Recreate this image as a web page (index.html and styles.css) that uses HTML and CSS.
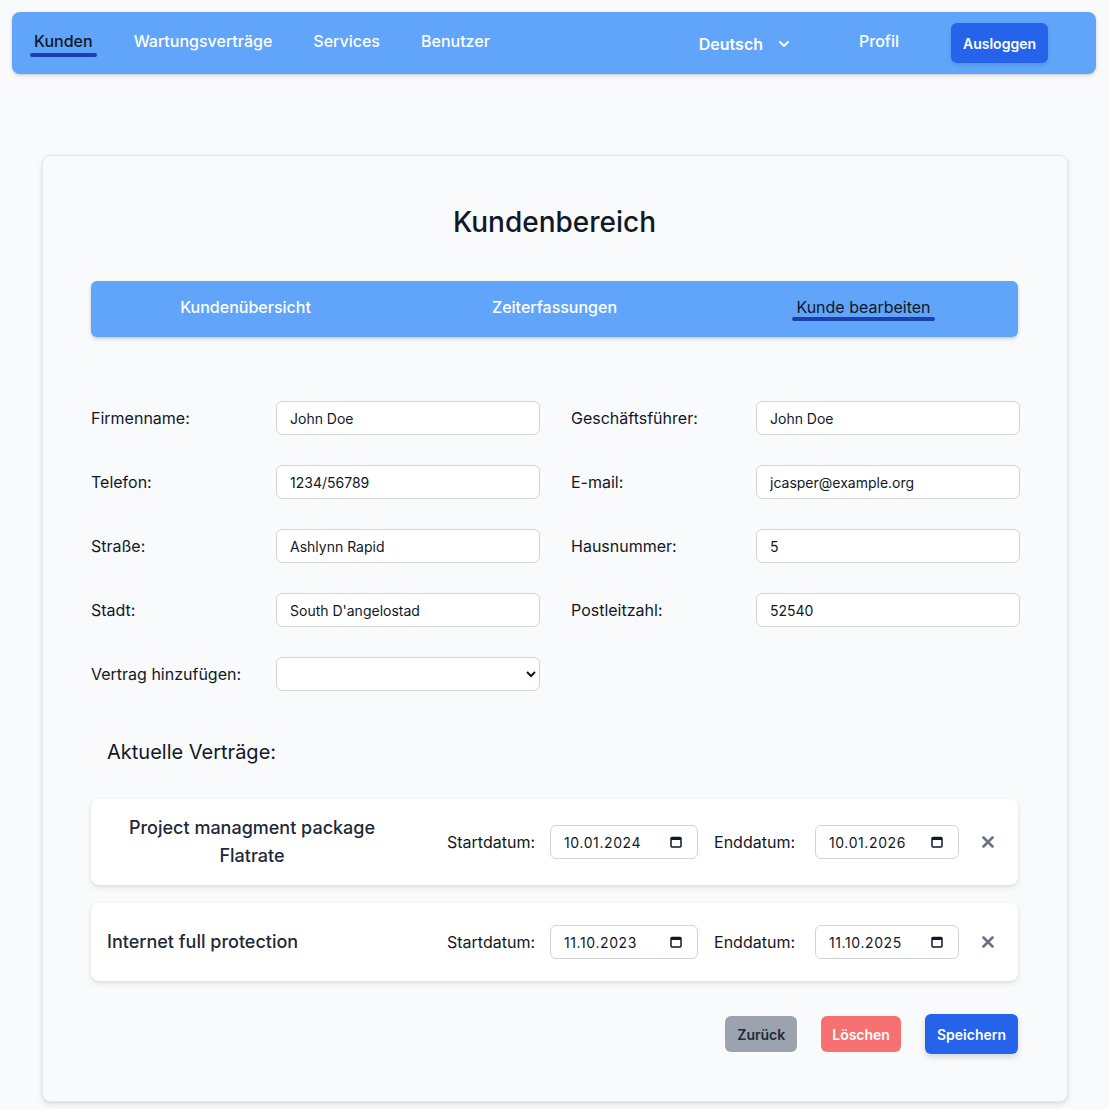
FILE: index.html
```html
<!DOCTYPE html>
<html lang="de">
<head>
<meta charset="utf-8">
<title>Kundenbereich</title>
<link rel="stylesheet" href="styles.css">
</head>
<body>
<nav class="topnav">
  <div class="nav-left">
    <a class="nav-item active">Kunden</a>
    <a class="nav-item">Wartungsverträge</a>
    <a class="nav-item">Services</a>
    <a class="nav-item">Benutzer</a>
  </div>
  <div class="nav-right">
    <div class="lang">
      <span>Deutsch</span>
      <svg class="chev" width="12" height="8" viewBox="0 0 12 8"><path d="M2 2 L6 6 L10 2" fill="none" stroke="#fff" stroke-width="2" stroke-linecap="round" stroke-linejoin="round"/></svg>
    </div>
    <a class="nav-item">Profil</a>
    <button class="btn-logout">Ausloggen</button>
  </div>
</nav>

<main class="card">
  <h1 class="title">Kundenbereich</h1>
  <div class="subnav">
    <div class="sub-cell"><a class="sub-item">Kundenübersicht</a></div>
    <div class="sub-cell"><a class="sub-item">Zeiterfassungen</a></div>
    <div class="sub-cell"><a class="sub-item active">Kunde bearbeiten</a></div>
  </div>

  <form class="form">
    <div class="field"><label>Firmenname:</label><input class="input" value="John Doe"></div>
    <div class="field"><label>Geschäftsführer:</label><input class="input" value="John Doe"></div>
    <div class="field"><label>Telefon:</label><input class="input" value="1234/56789"></div>
    <div class="field"><label>E-mail:</label><input class="input" value="jcasper@example.org"></div>
    <div class="field"><label>Straße:</label><input class="input" value="Ashlynn Rapid"></div>
    <div class="field"><label>Hausnummer:</label><input class="input" value="5"></div>
    <div class="field"><label>Stadt:</label><input class="input" value="South D'angelostad"></div>
    <div class="field"><label>Postleitzahl:</label><input class="input" value="52540"></div>
    <div class="field"><label>Vertrag hinzufügen:</label><select class="input select"><option></option></select></div>
  </form>

  <h2 class="subtitle">Aktuelle Verträge:</h2>

  <div class="contracts">
    <div class="contract">
      <div class="c-name">Project managment package Flatrate</div>
      <div class="c-dates">
        <span class="c-label">Startdatum:</span>
        <div class="date"><span>10.01.2024</span><svg width="12" height="12" viewBox="0 0 12 12"><rect x="1" y="1.5" width="10" height="9.5" rx="1" fill="none" stroke="#111827" stroke-width="1.5"/><rect x="1" y="1.5" width="10" height="2.5" fill="#111827"/></svg></div>
        <span class="c-label end">Enddatum:</span>
        <div class="date"><span>10.01.2026</span><svg width="12" height="12" viewBox="0 0 12 12"><rect x="1" y="1.5" width="10" height="9.5" rx="1" fill="none" stroke="#111827" stroke-width="1.5"/><rect x="1" y="1.5" width="10" height="2.5" fill="#111827"/></svg></div>
        <button class="remove" type="button"><svg width="12" height="12" viewBox="0 0 12 12"><path d="M1.5 1.5 L10.5 10.5 M10.5 1.5 L1.5 10.5" stroke="#6b7280" stroke-width="2.6" stroke-linecap="round"/></svg></button>
      </div>
    </div>
    <div class="contract">
      <div class="c-name">Internet full protection</div>
      <div class="c-dates">
        <span class="c-label">Startdatum:</span>
        <div class="date"><span>11.10.2023</span><svg width="12" height="12" viewBox="0 0 12 12"><rect x="1" y="1.5" width="10" height="9.5" rx="1" fill="none" stroke="#111827" stroke-width="1.5"/><rect x="1" y="1.5" width="10" height="2.5" fill="#111827"/></svg></div>
        <span class="c-label end">Enddatum:</span>
        <div class="date"><span>11.10.2025</span><svg width="12" height="12" viewBox="0 0 12 12"><rect x="1" y="1.5" width="10" height="9.5" rx="1" fill="none" stroke="#111827" stroke-width="1.5"/><rect x="1" y="1.5" width="10" height="2.5" fill="#111827"/></svg></div>
        <button class="remove" type="button"><svg width="12" height="12" viewBox="0 0 12 12"><path d="M1.5 1.5 L10.5 10.5 M10.5 1.5 L1.5 10.5" stroke="#6b7280" stroke-width="2.6" stroke-linecap="round"/></svg></button>
      </div>
    </div>
  </div>

  <div class="actions">
    <button class="btn btn-back" type="button">Zurück</button>
    <button class="btn btn-delete" type="button">Löschen</button>
    <button class="btn btn-save" type="button">Speichern</button>
  </div>
</main>
</body>
</html>
```

FILE: styles.css
```css
* { box-sizing: border-box; }

body {
  margin: 0;
  padding: 12px 13px 7px 12px;
  background: #f9fafb;
  font-family: Inter, "Noto Sans", sans-serif;
  color: #111827;
}

a { cursor: pointer; }

.topnav {
  height: 62px;
  background: #60a5fa;
  border-radius: 8px;
  box-shadow: 0 2px 4px rgba(0,0,0,0.12), 0 1px 2px rgba(0,0,0,0.08);
  display: flex;
  align-items: center;
  justify-content: space-between;
  padding: 0 48px 0 18px;
}

.nav-left, .nav-right {
  display: flex;
  align-items: center;
}

.nav-left { gap: 33px; }

.nav-item {
  font-size: 16px;
  font-weight: 500;
  line-height: 24px;
  color: #fff;
  padding: 0 4px;
  display: flex;
  flex-direction: column;
}

.nav-item::after {
  content: "";
  display: block;
  height: 4px;
  border-radius: 2px;
  margin: 0 -4px;
  background: transparent;
}

.nav-item.active { color: #111827; }
.nav-item.active::after { background: #1e40af; }

.lang {
  display: flex;
  align-items: center;
  color: #fff;
  font-size: 16px;
  font-weight: 600;
  line-height: 24px;
  margin-top: 2px;
  margin-right: 65px;
  padding-left: 1px;
}

.lang .chev { margin-left: 15px; }

.btn-logout {
  margin-left: 48px;
  height: 40px;
  padding: 0 12px;
  border: none;
  border-radius: 6px;
  background: #2563eb;
  color: #fff;
  font-family: inherit;
  font-size: 14px;
  font-weight: 600;
  box-shadow: 0 2px 4px rgba(0,0,0,0.12);
}

.card {
  margin: 81px 0 0 30px;
  width: 1026px;
  background: #f9fafb;
  border: 1px solid #e5e7eb;
  border-radius: 8px;
  box-shadow: 0 3px 6px rgba(0,0,0,0.08), 0 1px 3px rgba(0,0,0,0.06);
  padding: 48px 49px 47px 48px;
}

.title {
  margin: 0;
  text-align: center;
  font-size: 28px;
  line-height: 36px;
  font-weight: 500;
  color: #111827;
}

.subnav {
  margin-top: 41px;
  height: 56px;
  background: #60a5fa;
  border-radius: 6px;
  box-shadow: 0 2px 4px rgba(0,0,0,0.14), 0 1px 2px rgba(0,0,0,0.08);
  display: grid;
  grid-template-columns: 1fr 1fr 1fr;
  align-items: center;
}

.sub-cell { display: flex; justify-content: center; }

.sub-item {
  font-size: 16px;
  font-weight: 500;
  line-height: 20px;
  color: #fff;
  padding: 0 4px;
  display: flex;
  flex-direction: column;
}

.sub-item::after {
  content: "";
  display: block;
  height: 4px;
  border-radius: 2px;
  margin: 0 -4px;
  background: transparent;
}

.sub-item.active { color: #111827; font-weight: 400; }
.sub-item.active::after { background: #1e40af; }

.form {
  margin-top: 64px;
  display: grid;
  grid-template-columns: 449px 449px;
  column-gap: 31px;
  row-gap: 30px;
}

.field {
  display: grid;
  grid-template-columns: 185px 1fr;
  align-items: center;
}

.field label {
  font-size: 16px;
  line-height: 24px;
  color: #111827;
}

.input {
  height: 34px;
  width: 264px;
  border: 1px solid #d1d5db;
  border-radius: 6px;
  background: #fff;
  padding: 0 13px;
  font-family: inherit;
  font-size: 14px;
  color: #111827;
  outline: none;
}

.select { padding: 0 6px 0 10px; }

.subtitle {
  margin: 47px 0 0 16px;
  font-size: 20px;
  line-height: 28px;
  font-weight: 400;
  color: #111827;
}

.contracts {
  margin-top: 33px;
  display: flex;
  flex-direction: column;
  gap: 18px;
}

.contract {
  background: #fff;
  border-radius: 8px;
  box-shadow: 0 3px 6px rgba(0,0,0,0.08), 0 1px 3px rgba(0,0,0,0.06);
  padding: 15px 16px;
  display: flex;
  align-items: center;
  justify-content: space-between;
}

.c-name {
  max-width: 290px;
  text-align: center;
  font-size: 18px;
  line-height: 28px;
  font-weight: 500;
  color: #1f2937;
}

.c-dates {
  display: flex;
  align-items: center;
  height: 48px;
}

.c-label {
  font-size: 16px;
  line-height: 24px;
  color: #111827;
  margin-right: 15px;
}

.c-label.end { margin-left: 16px; margin-right: 20px; }

.date {
  height: 34px;
  width: 148px;
  border: 1px solid #d1d5db;
  border-radius: 6px;
  background: #fff;
  padding: 0 15px 0 13px;
  display: flex;
  align-items: center;
  justify-content: space-between;
  font-size: 14px;
  color: #111827;
  letter-spacing: 0.6px;
}

.date + .c-label + .date { width: 144px; }

.remove {
  margin-left: 15px;
  width: 28px;
  height: 28px;
  padding: 0;
  border: none;
  background: transparent;
  display: flex;
  align-items: center;
  justify-content: center;
}

.actions {
  margin-top: 33px;
  display: flex;
  justify-content: flex-end;
  align-items: center;
  gap: 24px;
}

.btn {
  border: none;
  border-radius: 6px;
  font-family: inherit;
  font-size: 14px;
  font-weight: 600;
  height: 36px;
  padding: 0 12px;
}

.btn-back { background: #9ca3af; color: #1f2937; }
.btn-delete { background: #f87171; color: #fff; padding: 0 11px; }
.btn-save {
  background: #2563eb;
  color: #fff;
  height: 40px;
  padding: 0 12px;
  box-shadow: 0 3px 6px rgba(0,0,0,0.15);
}
```
